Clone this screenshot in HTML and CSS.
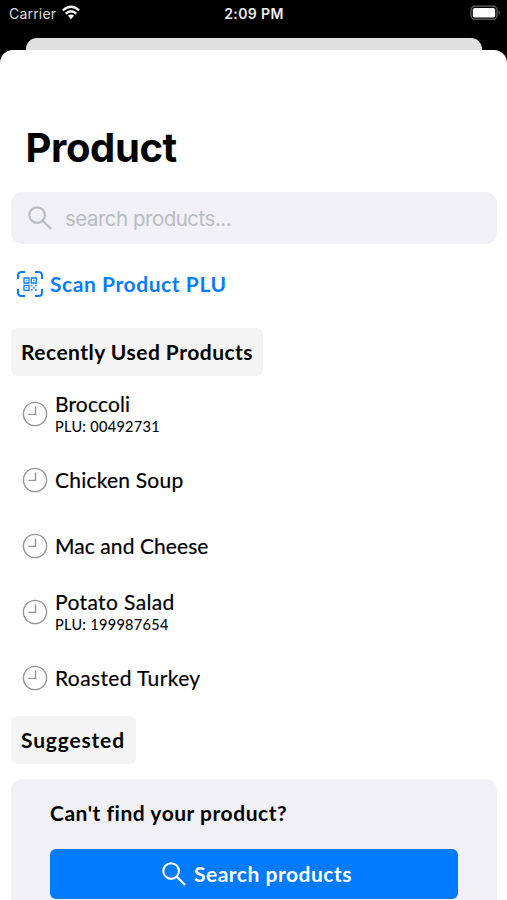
FILE: index.html
```html
<!DOCTYPE html>
<html lang="en">
<head>
<meta charset="utf-8">
<title>Product</title>
<link rel="stylesheet" href="styles.css">
</head>
<body>
<svg class="defs" width="0" height="0" aria-hidden="true">
  <symbol id="clock" viewBox="0 0 26 26"><circle cx="13" cy="13" r="11.6"/><path d="M13.5 5.5V13.4H6.3"/></symbol>
  <symbol id="search" viewBox="0 0 26 26"><circle cx="10.1" cy="10.1" r="7.8"/><path d="M15.8 15.8L24.2 24"/></symbol>
</svg>
<header class="status">
  <div class="carrier"><span>Carrier</span>
    <svg class="wifi" width="20" height="16" viewBox="0 0 20 16"><path d="M1.8 5.5Q10-2 18.2 5.5M4.7 8.6Q10 3.9 15.3 8.6"/><path class="dot" d="M6.9 10.8Q10 8.2 13.1 10.8L10 14.2Z"/></svg>
  </div>
  <span class="time">2:09 PM</span>
  <svg class="battery" width="31" height="16" viewBox="0 0 31 16"><rect class="shell" x="1" y="1.2" width="26" height="13" rx="3.8"/><rect class="charge" x="2.8" y="3" width="22.4" height="9.4" rx="2"/><path class="cap" d="M28.5 5.5Q31 7.7 28.5 9.9Z"/></svg>
</header>
<div class="back-sheet"></div>
<main class="sheet">
  <h1>Product</h1>
  <div class="field"><svg width="26" height="26"><use href="#search"/></svg><span>search products...</span></div>
  <div class="scan">
    <svg width="26" height="26" viewBox="0 0 26 26">
      <path class="frame" d="M1 8V4.5Q1 1 4.5 1H8M18 1H21.5Q25 1 25 4.5V8M25 18V21.5Q25 25 21.5 25H18M8 25H4.5Q1 25 1 21.5V18"/>
      <path class="code" d="M7 7h5v5H7zM14.3 7h5v5h-5zM7 14.3h5v5H7z"/>
      <path class="bits" d="M8.7 8.7h1.6v1.6H8.7zM16 8.7h1.6v1.6H16zM8.7 16h1.6v1.6H8.7zM13.7 13.7h1.9v1.9h-1.9zM18 13.7h1.9v1.9H18zM15.8 15.8h2v2h-2zM13.7 18h1.9v1.9h-1.9zM18 18h1.9v1.9H18z"/>
    </svg>
    <span>Scan Product PLU</span>
  </div>
  <h2 class="chip recent"><span>Recently Used Products</span></h2>
  <ul class="list">
    <li><svg width="26" height="26"><use href="#clock"/></svg><div><p class="name broccoli">Broccoli</p><p class="plu">PLU: 00492731</p></div></li>
    <li><svg width="26" height="26"><use href="#clock"/></svg><p class="name soup">Chicken Soup</p></li>
    <li><svg width="26" height="26"><use href="#clock"/></svg><p class="name mac">Mac and Cheese</p></li>
    <li><svg width="26" height="26"><use href="#clock"/></svg><div><p class="name potato">Potato Salad</p><p class="plu">PLU: 199987654</p></div></li>
    <li><svg width="26" height="26"><use href="#clock"/></svg><p class="name turkey">Roasted Turkey</p></li>
  </ul>
  <h2 class="chip suggested"><span>Suggested</span></h2>
  <section class="help">
    <h3>Can't find your product?</h3>
    <button class="cta" type="button"><svg width="26" height="26"><use href="#search"/></svg><span>Search products</span></button>
  </section>
</main>
</body>
</html>
```
FILE: styles.css
```css
* { box-sizing: border-box; margin: 0; padding: 0; }
html, body { height: 900px; overflow: hidden; }
body { background: #000; color: #000; font-family: Lato, "Open Sans", sans-serif; display: flex; flex-direction: column; }
svg { flex: none; fill: none; stroke: currentColor; }
.defs { position: absolute; }
.status { height: 38px; flex: none; display: grid; grid-template-columns: 1fr auto 1fr; align-items: start; padding: 5px 6px 0 9px; color: #eee; font: 14px/18px Inter, sans-serif; }
.carrier { display: flex; gap: 5px; letter-spacing: .2px; color: #ddd; }
.wifi { color: #fff; stroke-width: 2.3; }
.wifi .dot { fill: #fff; stroke: none; }
.time { font-weight: 600; letter-spacing: .4px; margin-right: 2px; }
.battery { justify-self: end; }
.battery .shell { stroke: #666; stroke-width: 1.2; }
.battery .charge { fill: #fff; stroke: none; }
.battery .cap { fill: #666; stroke: none; }
.back-sheet { height: 12px; flex: none; margin: 0 25px 0 26px; border-radius: 11px 11px 0 0; background: #e0e0e0; }
.sheet { flex: 1; min-height: 0; overflow: hidden; background: #fff; border-radius: 13px 13px 0 0; padding: 73px 10px 0 11px; }
h1 { font: 700 40px/50px Inter, sans-serif; letter-spacing: -.4px; padding-left: 14.5px; margin-bottom: 19px; }
.field { height: 52px; border-radius: 12px; background: #f0f0f5; display: flex; align-items: center; gap: 12px; padding-left: 16px; color: #b9bcc1; font: 400 20.5px/26px Inter, sans-serif; letter-spacing: -.5px; stroke-width: 2.2; }
.field span { padding-top: 2px; }
.scan { display: flex; align-items: center; gap: 7px; height: 28px; margin: 26px 0 30px 6px; color: #087cff; font-size: 21px; font-weight: 700; line-height: 28px; letter-spacing: .57px; }
.scan .frame { stroke-width: 2; }
.scan .code { stroke-width: 1.3; }
.scan .bits { fill: currentColor; stroke: none; opacity: .75; }
.chip { width: max-content; height: 48px; padding: 0 0 0 10px; border-radius: 6px; background: #f4f4f4; font-size: 21px; font-weight: 700; line-height: 48px; letter-spacing: .48px; }
.recent { width: 252px; }
.suggested { width: 125px; letter-spacing: .83px; }
.list { list-style: none; margin: 5px 0; }
.list li { height: 66px; display: flex; align-items: center; gap: 7px; padding-left: 11px; }
.list svg { color: #949494; stroke-width: 1.4; }
.name { font-size: 21px; line-height: 26px; letter-spacing: .3px; -webkit-text-stroke: .2px #000; }
.soup { letter-spacing: .22px; }
.mac { letter-spacing: .08px; }
.broccoli { letter-spacing: .15px; }
.potato, .turkey { letter-spacing: .38px; }
.broccoli, .potato { line-height: 24px; }
.plu { font-size: 14.5px; line-height: 20px; letter-spacing: .3px; padding-top: 1px; margin-bottom: -1px; -webkit-text-stroke: .1px #000; }
.help { height: 140px; margin-top: 15px; border-radius: 12px; background: #f0f0f5; padding: 20px 39px 0; }
h3 { font-size: 21px; font-weight: 700; line-height: 28px; letter-spacing: .52px; margin-bottom: 22px; }
.cta { width: 408px; height: 50px; padding-left: 5px; border: 0; border-radius: 6px; background: #007aff; color: #fff; display: flex; align-items: center; justify-content: center; gap: 7px; font: 700 21px/28px Lato, sans-serif; letter-spacing: .52px; stroke-width: 2.1; }
```
